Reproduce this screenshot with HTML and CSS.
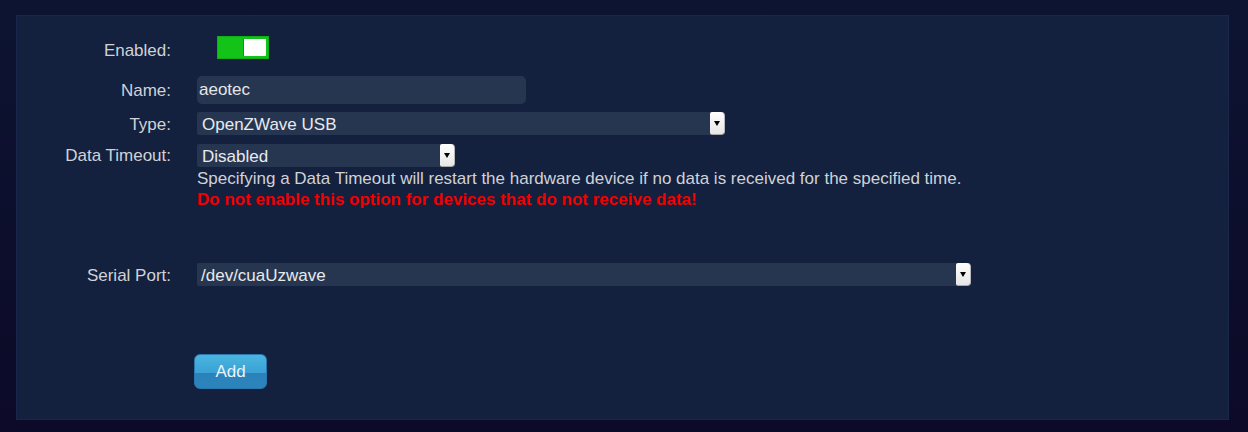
FILE: index.html
```html
<!DOCTYPE html>
<html>
<head>
<meta charset="utf-8">
<link rel="stylesheet" href="styles.css">
</head>
<body>
<div class="panel">
  <div class="row row-enabled">
    <div class="label label-enabled">Enabled:</div>
    <div class="field">
      <span class="toggle"><span class="thumb"></span></span>
    </div>
  </div>
  <div class="row row-name">
    <div class="label">Name:</div>
    <div class="field"><div class="input name-input">aeotec</div></div>
  </div>
  <div class="row row-type">
    <div class="label">Type:</div>
    <div class="field"><div class="select type-select"><span class="sel-text">OpenZWave USB</span><span class="arrow"></span></div></div>
  </div>
  <div class="row row-timeout">
    <div class="label">Data Timeout:</div>
    <div class="field">
      <div class="select timeout-select"><span class="sel-text">Disabled</span><span class="arrow"></span></div>
      <div class="help">Specifying a Data Timeout will restart the hardware device if no data is received for the specified time.</div>
      <div class="warn">Do not enable this option for devices that do not receive data!</div>
    </div>
  </div>
  <div class="row row-serial">
    <div class="label">Serial Port:</div>
    <div class="field"><div class="select serial-select"><span class="sel-text">/dev/cuaUzwave</span><span class="arrow"></span></div></div>
  </div>
  <div class="row row-add">
    <div class="label"></div>
    <div class="field"><button class="btn">Add</button></div>
  </div>
</div>
</body>
</html>
```
FILE: styles.css
```css
html, body {
  margin: 0;
  padding: 0;
}
body {
  width: 1248px;
  height: 432px;
  background: linear-gradient(#0c1431, #0c0a28);
  font-family: "Liberation Sans", Arial, sans-serif;
  font-size: 17px;
  color: #d2d4d8;
  padding: 15px 19px 12px 16px;
  box-sizing: border-box;
}
.panel {
  background: #13213f;
  border: 1px solid #19284a;
  height: 405px;
  box-sizing: border-box;
  padding-top: 20px;
}
.row {
  display: flex;
  align-items: center;
}
.label {
  width: 154px;
  flex: none;
  text-align: right;
  margin-right: 26px;
  color: #d0d2d6;
  line-height: 20px;
  padding-top: 2px;
}
.field {
  flex: none;
}
.row-enabled { height: 23px; align-items: flex-start; }
.row-enabled .label { padding-top: 5px; }
.row-name { margin-top: 17px; }
.row-type { margin-top: 8px; }
.row-timeout { margin-top: 9px; align-items: flex-start; }
.row-timeout .label { padding-top: 2px; }
.row-serial { margin-top: 53px; }
.row-add { margin-top: 68px; }

.toggle {
  display: block;
  width: 52px;
  height: 23px;
  box-sizing: border-box;
  background: #13c318;
  border: 1px solid #0fae15;
  margin-left: 20px;
  position: relative;
}
.thumb {
  position: absolute;
  right: 2px;
  top: 2px;
  width: 22px;
  height: 17px;
  background: #ffffff;
  border-left: 1px solid #0a9a10;
}
.input {
  width: 329px;
  height: 28px;
  box-sizing: border-box;
  background: #273650;
  border-radius: 5px;
  padding: 0 2px;
  line-height: 28px;
  color: #e4e6ea;
}
.select {
  display: flex;
  height: 23px;
  background: #273650;
  border-radius: 2px 4px 4px 2px;
  color: #e8eaee;
}
.sel-text {
  flex: 1;
  padding-left: 5px;
  line-height: 25px;
}
.type-select { width: 528px; }
.timeout-select { width: 258px; }
.serial-select { width: 774px; }
.serial-select .sel-text { padding-left: 4px; }
.arrow {
  flex: none;
  width: 15px;
  height: 23px;
  box-sizing: border-box;
  background: linear-gradient(#ffffff, #e6e6e6);
  border-radius: 2px 4px 4px 2px;
  border-right: 1px solid #b8b8b8;
  border-bottom: 1px solid #a8a8a8;
  position: relative;
}
.arrow::after {
  content: "";
  position: absolute;
  left: 4px;
  top: 9px;
  border-left: 3.5px solid transparent;
  border-right: 3.5px solid transparent;
  border-top: 5px solid #000;
}
.help {
  line-height: 21px;
  color: #d0d2d6;
  margin-top: 1px;
}
.warn {
  line-height: 21px;
  color: #f00000;
  font-weight: bold;
}
.btn {
  margin-left: -3px;
  width: 73px;
  height: 35px;
  border: 1px solid #2a78ad;
  border-radius: 6px;
  background: linear-gradient(#4bb5e0 0%, #3aa1d4 55%, #2b82bb 56%, #2b84bc 100%);
  color: #e8f4fb;
  font-family: "Liberation Sans", Arial, sans-serif;
  font-size: 17px;
  padding: 0;
}
```
